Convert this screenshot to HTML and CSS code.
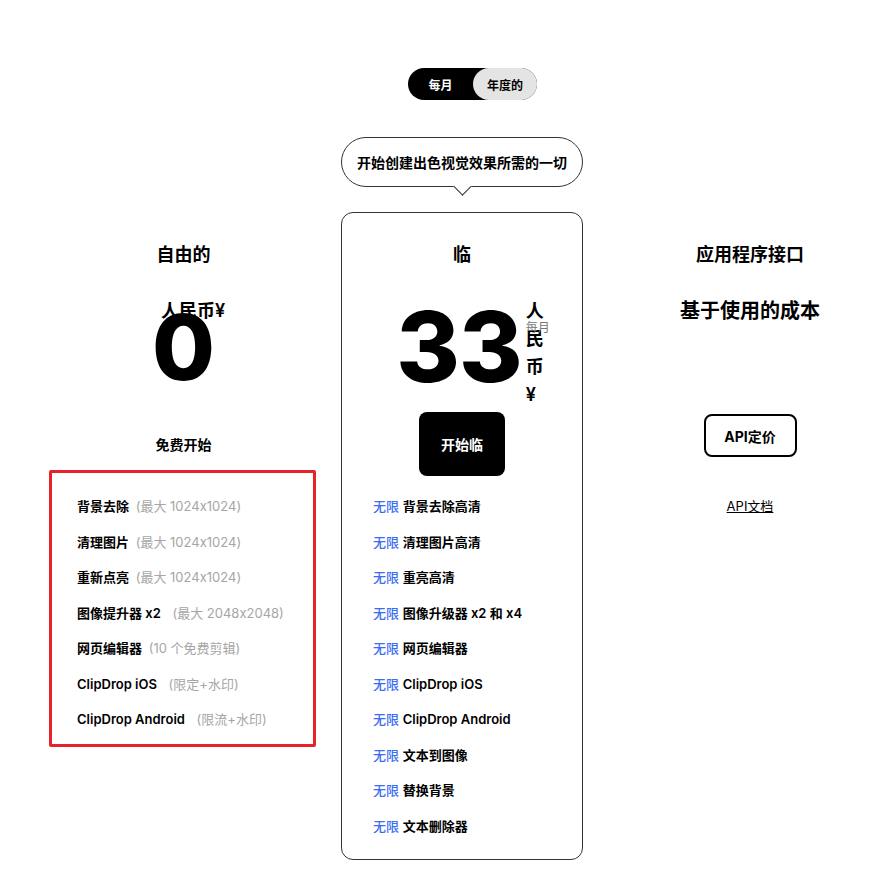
FILE: index.html
```html
<!DOCTYPE html>
<html lang="zh-CN">
<head>
<meta charset="utf-8">
<title>定价</title>
<link rel="stylesheet" href="styles.css">
</head>
<body>
<div class="page">
  <div class="toggle">
    <span class="seg seg-active">每月</span>
    <span class="seg seg-idle">年度的</span>
  </div>

  <div class="bubble-row">
    <div class="bubble">开始创建出色视觉效果所需的一切</div>
  </div>

  <div class="plans">
    <section class="plan plan-free">
      <h2 class="plan-title">自由的</h2>
      <div class="price">
        <div class="price-inner">
          <span class="amount amount-free">0</span>
          <span class="currency-overlay">人民币¥</span>
        </div>
      </div>
      <div class="cta cta-free"><span class="cta-text">免费开始</span></div>
      <ul class="features features-highlight">
        <li><span class="label">背景去除</span> <span class="note">(最大 1024x1024)</span></li>
        <li><span class="label">清理图片</span> <span class="note">(最大 1024x1024)</span></li>
        <li><span class="label">重新点亮</span> <span class="note">(最大 1024x1024)</span></li>
        <li><span class="label">图像提升器 x2</span> <span class="note note-wide">(最大 2048x2048)</span></li>
        <li><span class="label">网页编辑器</span> <span class="note">(10 个免费剪辑)</span></li>
        <li><span class="label">ClipDrop iOS</span> <span class="note note-wide">(限定+水印)</span></li>
        <li><span class="label">ClipDrop Android</span> <span class="note note-wide">(限流+水印)</span></li>
      </ul>
    </section>

    <section class="plan plan-pro card">
      <h2 class="plan-title">临</h2>
      <div class="price">
        <div class="price-inner price-pro">
          <span class="amount amount-pro">33</span>
          <div class="currency-col">
            <span class="currency">人民币¥</span>
            <span class="period">每月</span>
          </div>
        </div>
      </div>
      <div class="cta cta-pro"><a class="btn-solid">开始临</a></div>
      <ul class="features features-pro">
        <li><span class="unl">无限</span> <span class="label">背景去除高清</span></li>
        <li><span class="unl">无限</span> <span class="label">清理图片高清</span></li>
        <li><span class="unl">无限</span> <span class="label">重亮高清</span></li>
        <li><span class="unl">无限</span> <span class="label">图像升级器 x2 和 x4</span></li>
        <li><span class="unl">无限</span> <span class="label">网页编辑器</span></li>
        <li><span class="unl">无限</span> <span class="label">ClipDrop iOS</span></li>
        <li><span class="unl">无限</span> <span class="label">ClipDrop Android</span></li>
        <li><span class="unl">无限</span> <span class="label">文本到图像</span></li>
        <li><span class="unl">无限</span> <span class="label">替换背景</span></li>
        <li><span class="unl">无限</span> <span class="label">文本删除器</span></li>
      </ul>
    </section>

    <section class="plan plan-api">
      <h2 class="plan-title">应用程序接口</h2>
      <div class="price price-api">
        <div class="usage">基于使用的成本</div>
      </div>
      <div class="cta cta-api"><a class="btn-outline">API定价</a></div>
      <ul class="features features-api">
        <li><a class="doc-link">API文档</a></li>
      </ul>
    </section>
  </div>
</div>
</body>
</html>
```

FILE: styles.css
```css
html, body {
  margin: 0;
  padding: 0;
  background: #ffffff;
}

body {
  font-family: "Inter", "Noto Sans CJK SC", sans-serif;
  color: #000;
}

.page {
  width: 883px;
  padding-top: 68px;
  padding-bottom: 30px;
}

/* toggle */
.toggle {
  margin-left: 408px;
  width: 129px;
  height: 32px;
  display: flex;
  background: #000;
  border-radius: 16px;
}

.seg {
  flex: 1;
  display: flex;
  align-items: center;
  justify-content: center;
  font-size: 12px;
  font-weight: 700;
  border-radius: 16px;
}

.seg-active {
  color: #fff;
  flex: 0 0 65px;
}

.seg-idle {
  background: #e4e4e4;
  color: #000;
}

/* bubble */
.bubble-row {
  margin-top: 37px;
  padding-left: 341px;
}

.bubble {
  position: relative;
  box-sizing: border-box;
  width: 242px;
  height: 50px;
  border: 1px solid #333;
  border-radius: 25px;
  display: flex;
  align-items: center;
  justify-content: center;
  font-size: 14px;
  font-weight: 600;
}

.bubble::after {
  content: "";
  position: absolute;
  left: 50%;
  bottom: -7px;
  width: 12px;
  height: 12px;
  margin-left: -6px;
  background: #fff;
  border-right: 1px solid #333;
  border-bottom: 1px solid #333;
  transform: rotate(45deg);
}

/* plans */
.plans {
  margin-top: 25px;
  padding-left: 49px;
  display: flex;
  align-items: flex-start;
}

.plan {
  box-sizing: border-box;
  padding-top: 30px;
  display: flex;
  flex-direction: column;
}

.plan-free {
  width: 269px;
  margin-right: 23px;
}

.card {
  width: 242px;
  border: 1px solid #333;
  border-radius: 12px;
  padding-top: 29px;
  padding-bottom: 0;
}

.plan-api {
  width: 266px;
  margin-left: 34px;
}

.plan-title {
  margin: 0;
  font-size: 18px;
  line-height: 26px;
  font-weight: 700;
  text-align: center;
}

/* price */
.price {
  margin-top: 29px;
  height: 100px;
  display: flex;
  justify-content: center;
}

.price-inner {
  position: relative;
  display: flex;
  align-items: flex-start;
}

.amount {
  line-height: 100px;
  font-weight: 800;
}

.amount-free {
  font-size: 91px;
}

.amount-pro {
  font-size: 97px;
  letter-spacing: -1px;
}

.currency-overlay {
  position: absolute;
  top: 0;
  left: 9px;
  font-size: 18px;
  line-height: 28px;
  font-weight: 600;
  white-space: nowrap;
}

.price-pro {
  margin-left: 18px;
}

.currency-col {
  position: relative;
  width: 20px;
  margin-left: 4px;
}

.currency {
  display: block;
  font-size: 18px;
  line-height: 28px;
  font-weight: 600;
  word-break: break-all;
}

.period {
  position: absolute;
  top: 24px;
  left: 0;
  font-size: 12px;
  line-height: 14px;
  color: #777;
  white-space: nowrap;
}

.price-api {
  margin-top: 29px;
}

.usage {
  font-size: 20px;
  line-height: 28px;
  font-weight: 700;
}

/* cta */
.cta {
  box-sizing: border-box;
  height: 79px;
  display: flex;
  justify-content: center;
  align-items: flex-start;
}

.cta-free { padding-top: 40px; }
.cta-pro { padding-top: 15px; }
.cta-api { padding-top: 17px; }

.cta-text {
  font-size: 14px;
  line-height: 16px;
  font-weight: 600;
}

.btn-solid {
  width: 86px;
  height: 64px;
  border-radius: 8px;
  background: #000;
  color: #fff;
  display: flex;
  align-items: center;
  justify-content: center;
  font-size: 14px;
  font-weight: 700;
}

.btn-outline {
  box-sizing: border-box;
  width: 93px;
  height: 43px;
  border: 2px solid #000;
  border-radius: 8px;
  display: flex;
  align-items: center;
  justify-content: center;
  font-size: 14px;
  font-weight: 700;
  color: #000;
}

/* features */
.features {
  list-style: none;
  margin: 0;
  padding: 20px 0 0 0;
  display: flex;
  flex-direction: column;
  gap: 15.5px;
}

.features li {
  font-size: 13px;
  line-height: 20px;
  white-space: nowrap;
}

.features-highlight {
  margin-top: -6px;
  margin-right: 2px;
  border: 3px solid #e8202a;
  border-radius: 2px;
  padding: 23px 0 15px 25px;
}

.features-pro {
  padding: 20px 0 23px 31px;
}

.features-api {
  align-items: center;
}

.label {
  font-weight: 600;
}

.note {
  color: #a6a6a6;
  margin-left: 3px;
}

.note-wide {
  margin-left: 8px;
}

.unl {
  color: #3b6cf4;
  font-weight: 500;
}

.doc-link {
  font-size: 13px;
  color: #000;
  text-decoration: underline;
}
```
